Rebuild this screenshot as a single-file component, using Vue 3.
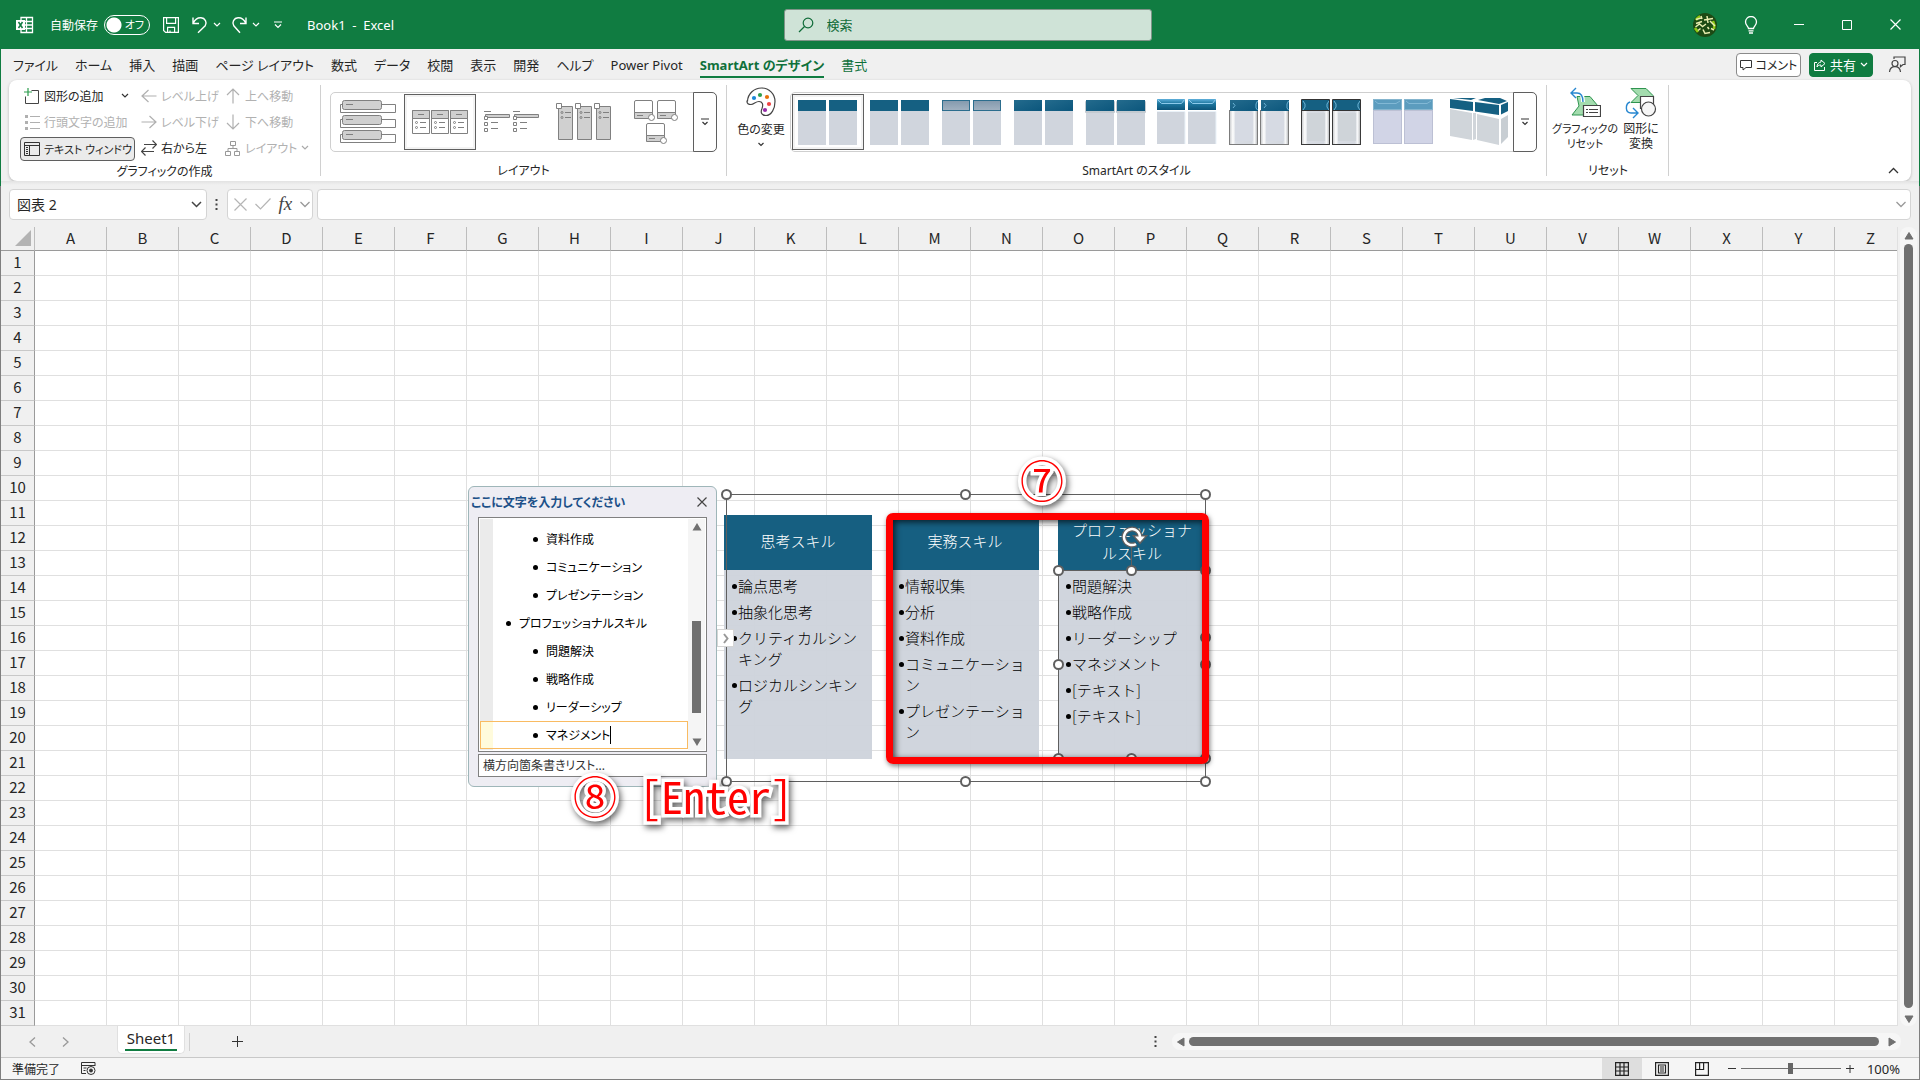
<template>
  <div class="window">
    <!-- タイトルバー -->
    <header class="titlebar">
      <div class="title-left">
        <svg class="app-icon" width="18" height="18" viewBox="0 0 18 18">
          <path d="M5 1.500h11.500v15H5zM5 5.500h11.500M5 9h11.500M5 12.500h11.500M10.500 1.500v15" fill="none" stroke="#fff" stroke-width="1.300" />
          <rect x="0" y="4" width="9" height="10" fill="#fff" />
          <path d="M2.500 6l4 6M6.500 6l-4 6" stroke="#107c41" stroke-width="1.500" />
        </svg>
        <label class="autosave">
          <span>自動保存</span>
          <span class="switch">
            <input v-model="autoSave" type="checkbox" role="switch" />
            <span class="switch-text">オフ</span>
          </span>
        </label>
        <button class="plain save" aria-label="上書き保存">
          <svg width="16" height="16" viewBox="0 0 16 16" fill="none" stroke="#fff" stroke-width="1.200">
            <path d="M.6.600h14.800v14.800H2.600L.6 13.400zM3.600.6v5.800h9V.6M4.600 15.400v-5h7v5M7 15.400v-2" />
          </svg>
        </button>
        <button class="plain undo" aria-label="元に戻す">
          <svg width="16" height="18" viewBox="0 0 16 18" fill="none" stroke="#fff" stroke-width="1.400">
            <path d="M1 1.500v6h6M1.200 7.200C3 3.500 6 1.600 9 1.800c4 .2 6.500 4.500 4.200 8L6 16.800" />
          </svg>
          <svg width="8" height="6" viewBox="0 0 8 6" fill="none" stroke="#fff" stroke-width="1.200"><path d="M1 1l3 3 3-3" /></svg>
        </button>
        <button class="plain undo" aria-label="やり直し">
          <svg width="16" height="18" viewBox="0 0 16 18" fill="none" stroke="#fff" stroke-width="1.400">
            <path d="M15 1.500v6H9M14.800 7.200C13 3.500 10 1.600 7 1.800c-4 .2-6.500 4.500-4.200 8L9 16.800" />
          </svg>
          <svg width="8" height="6" viewBox="0 0 8 6" fill="none" stroke="#fff" stroke-width="1.200"><path d="M1 1l3 3 3-3" /></svg>
        </button>
        <button class="plain qat" aria-label="クイック アクセス ツール バーのユーザー設定">
          <svg width="8" height="8" viewBox="0 0 8 8" fill="none" stroke="#fff" stroke-width="1.200"><path d="M0 1h8M1 3.500l3 3 3-3" /></svg>
        </button>
        <span class="doc-name">Book1&nbsp; -&nbsp; Excel</span>
      </div>
      <label class="search">
        <svg width="16" height="16" viewBox="0 0 16 16" fill="none" stroke="#0f6b38" stroke-width="1.200">
          <circle cx="10" cy="6" r="4.800" /><path d="M6.500 9.500L1 15" />
        </svg>
        <input type="text" placeholder="検索" aria-label="検索" />
      </label>
      <div class="title-right">
        <svg class="avatar" width="24" height="24" viewBox="0 0 24 24">
          <circle cx="12" cy="12" r="12" fill="#1d4a14" />
          <path d="M20 8a11 11 0 0 1 1 8M3 7a11 11 0 0 1 4-4M2 15l3 4" stroke="#8bc814" stroke-width="2.600" fill="none" />
          <path d="M3 6.500l5-1.500M8 3l1 3M3 10.500l6-2M2.500 14l4-3 3 2.500M14 3l1 7M11 7l9-1.500M17 8l5 5M13 11l-4 3M5 17.500l2.500-2M10 16.500l2 4 5-1M14.500 14l1.500 2M18 15.500l3 1.500" stroke="#e8eeb0" stroke-width="1.500" fill="none" />
        </svg>
        <button class="plain win" aria-label="ヒント">
          <svg width="14" height="18" viewBox="0 0 14 18" fill="none" stroke="#fff" stroke-width="1.300">
            <path d="M4.500 12.500c0-2-3-3.200-3-6.500a5.500 5.500 0 0 1 11 0c0 3.300-3 4.500-3 6.500zM4.500 14.800h5M5 17h4" />
          </svg>
        </button>
        <button class="plain win" aria-label="最小化">
          <svg width="10" height="10" viewBox="0 0 10 10"><path d="M0 4.500h10" stroke="#fff" /></svg>
        </button>
        <button class="plain win" aria-label="元に戻す (縮小)">
          <svg width="10" height="10" viewBox="0 0 10 10"><path d="M.5.500h9v9h-9z" stroke="#fff" fill="none" /></svg>
        </button>
        <button class="plain win" aria-label="閉じる">
          <svg width="11" height="11" viewBox="0 0 11 11"><path d="M.5.500l10 10M10.500.500l-10 10" stroke="#fff" stroke-width="1.200" /></svg>
        </button>
      </div>
    </header>

    <!-- タブ -->
    <nav class="tabs">
      <button
        v-for="tab in tabs"
        :key="tab"
        class="tab"
        :class="{ active: tab === activeTab, context: tab === '書式' }"
        @click="activeTab = tab"
      >
        {{ tab }}
      </button>
      <div class="tabs-right">
        <button class="comment-btn">
          <svg width="12" height="12" viewBox="0 0 12 12" fill="none" stroke="#333"><path d="M.5 1.500h11v7H6l-3 2.500V8.500H.5z" /></svg>
          コメント
        </button>
        <button class="share-btn">
          <svg width="12" height="12" viewBox="0 0 12 12" fill="none" stroke="#fff"><path d="M3 3.500H.5v8h10V8M7 1l4 3.500L7 8V6C5 6 4 6.500 3 8c.2-3 1.500-4.500 4-5z" /></svg>
          共有
          <svg width="8" height="6" viewBox="0 0 8 6" fill="none" stroke="#fff" stroke-width="1.200"><path d="M1 1l3 3 3-3" /></svg>
        </button>
        <button class="plain presence" aria-label="プレゼンス">
          <svg width="18" height="17" viewBox="0 0 18 17" fill="none" stroke="#444" stroke-width="1.200">
            <path d="M6 3V1h11v7.500h-2l-2.500 2.200V8.500" /><circle cx="7" cy="7.500" r="3" /><path d="M1.500 16c.3-3.500 2.500-5.300 5.500-5.300s5.200 1.800 5.500 5.300" />
          </svg>
        </button>
      </div>
    </nav>

    <!-- リボン -->
    <div class="ribbon-area">
      <section class="ribbon">
        <div class="group">
          <div class="cmd-grid">
            <button class="cmd">
              <svg width="16" height="16" viewBox="0 0 16 16" fill="none"><path d="M7.500 2.500h7v13h-13v-7" stroke="#444" /><path d="M4 0v8M0 4h8" stroke="#2e9e4f" stroke-width="1.200" /></svg>
              図形の追加
              <svg class="split" width="8" height="6" viewBox="0 0 8 6" fill="none" stroke="#333" stroke-width="1.200"><path d="M1 1l3 3 3-3" /></svg>
            </button>
            <button class="cmd" disabled>
              <svg width="16" height="16" viewBox="0 0 16 16" fill="none" stroke="#b0b0b0" stroke-width="1.200"><path d="M15.500 8H1M7.500 2L1 8l6.500 6" /></svg>
              レベル上げ
            </button>
            <button class="cmd" disabled>
              <svg width="16" height="16" viewBox="0 0 16 16" fill="none" stroke="#b0b0b0" stroke-width="1.200"><path d="M8 15.500V1M2 7l6-6 6 6" /></svg>
              上へ移動
            </button>
            <button class="cmd" disabled>
              <svg width="16" height="16" viewBox="0 0 16 16" fill="none" stroke="#b0b0b0"><path d="M6 2.500h10M6 8.500h10M6 14.500h10" /><path d="M1 2.500h3M1 8.500h3M1 14.500h3" stroke-width="3" /></svg>
              行頭文字の追加
            </button>
            <button class="cmd" disabled>
              <svg width="16" height="16" viewBox="0 0 16 16" fill="none" stroke="#b0b0b0" stroke-width="1.200"><path d="M.5 8H15M8.500 2L15 8l-6.500 6" /></svg>
              レベル下げ
            </button>
            <button class="cmd" disabled>
              <svg width="16" height="16" viewBox="0 0 16 16" fill="none" stroke="#b0b0b0" stroke-width="1.200"><path d="M8 .5V15M2 9l6 6 6-6" /></svg>
              下へ移動
            </button>
            <button class="cmd pressed">
              <svg width="16" height="14" viewBox="0 0 16 14" fill="none" stroke="#333"><path d="M.5.500h15v13H.5zM.5 3.500h15M5.500 3.500v10M2 5.500h2M2 7.500h2M2 9.500h2M2 11.500h2" /></svg>
              テキスト ウィンドウ
            </button>
            <button class="cmd">
              <svg width="16" height="16" viewBox="0 0 16 16" fill="none" stroke="#444" stroke-width="1.200"><path d="M3 4.500h12.500M11.500.5l4 4-4 4M13 11.500H.5M4.500 7.500l-4 4 4 4" /></svg>
              右から左
            </button>
            <button class="cmd" disabled>
              <svg width="16" height="16" viewBox="0 0 16 16" fill="none" stroke="#999"><path d="M5.500 1.500h5v4h-5zM.5 11.500h5v4h-5zM9.500 11.500h5v4h-5zM3 11.500v-3h9v3M8 5.500v3" /></svg>
              レイアウト
              <svg width="8" height="6" viewBox="0 0 8 6" fill="none" stroke="#aaa" stroke-width="1.200"><path d="M1 1l3 3 3-3" /></svg>
            </button>
          </div>
          <div class="group-label">グラフィックの作成</div>
        </div>

        <div class="group">
          <div class="gallery">
            <button
              v-for="(layout, i) in layouts"
              :key="layout"
              class="thumb"
              :class="{ selected: i === 1 }"
              :aria-label="layout"
            >
              <svg width="70" height="54" viewBox="1 1 70 54" fill="none" stroke="#808080">
                <template v-if="i === 0">
                  <g v-for="n in 3" :key="n">
                    <path :d="`M8.500 ${n * 15 - 4.500}h55v8h-55z`" fill="#fff" />
                    <rect x="10.500" :y="n * 15 - 8.500" width="39" height="9" rx="2" fill="#d0d0d0" />
                    <path :d="`M14 ${n * 15 - 4.500}h7`" />
                  </g>
                </template>
                <template v-else-if="i === 1">
                  <g v-for="n in 3" :key="n">
                    <path :d="`M${n * 19 - 10.500} 16.500h17v23h-17z`" fill="#fff" />
                    <path :d="`M${n * 19 - 10.500} 16.500h17v8h-17z`" fill="#d0d0d0" />
                    <path :d="`M${n * 19 - 5} 20.500h6M${n * 19 - 3} 28.500h6M${n * 19 - 3} 33.500h6`" />
                    <circle :cx="n * 19 - 6.500" cy="28.500" r="1" /><circle :cx="n * 19 - 6.500" cy="33.500" r="1" />
                  </g>
                </template>
                <template v-else-if="i === 2">
                  <g v-for="n in 2" :key="n">
                    <path :d="`M${n * 29 - 19.500} 20.500h24v3h-24z`" fill="#d0d0d0" />
                    <path :d="`M${n * 29 - 21} 17.500h7M${n * 29 - 14} 28.500h7M${n * 29 - 14} 34.500h7`" />
                    <path :d="`M${n * 29 - 20.500} 22.500h3v3h-3zM${n * 29 - 20.500} 28.500h3v3h-3zM${n * 29 - 20.500} 34.500h3v3h-3z`" fill="#fff" />
                  </g>
                </template>
                <template v-else-if="i === 3">
                  <g v-for="n in 3" :key="n">
                    <path :d="`M${n * 19 - 8.500} 12.500h14v33h-14z`" fill="#d0d0d0" />
                    <path :d="`M${n * 19 - 10.500} 9.500h5v5h-5z`" fill="#fff" />
                    <path :d="`M${n * 19 - 2} 18.500h6M${n * 19 - 2} 23.500h6`" />
                    <circle :cx="n * 19 - 5" cy="18.500" r="1" /><circle :cx="n * 19 - 5" cy="23.500" r="1" />
                  </g>
                </template>
                <template v-else>
                  <g v-for="(p, n) in [[14, 6], [37, 6], [26, 29]]" :key="n" :transform="`translate(${p[0]} ${p[1]})`">
                    <rect x=".5" y=".5" width="18" height="18" rx="1.500" fill="#fff" />
                    <path d="M.5 12.500h18v6H.5z" fill="#d0d0d0" /><path d="M3 15.500h6" />
                    <circle cx="17.500" cy="17.500" r="3" fill="#fff" />
                  </g>
                </template>
              </svg>
            </button>
            <button class="more" aria-label="その他のレイアウト">
              <svg width="8" height="8" viewBox="0 0 8 8" fill="none" stroke="#333" stroke-width="1.200"><path d="M0 1h8M1.500 4L4 6.500 6.500 4" /></svg>
            </button>
          </div>
          <div class="group-label">レイアウト</div>
        </div>

        <div class="group">
          <div class="group-body">
            <button class="big color-btn">
              <svg width="30" height="30" viewBox="0 0 30 30">
                <path d="M1.500 14C2 6.500 8 1 15.500 1 23 1 29 7 29 14.500c0 7-3.500 14-9 14-5 0-5.500-3.500-4-7 1.500-3.800.5-7-3-7-3.500 0-5 3-8 3-2.500 0-4.200-1-4-3.500z" fill="#fff" stroke="#444" stroke-width="1.200" />
                <circle cx="8" cy="11" r="2.100" fill="#1b87d6" /><circle cx="14" cy="8" r="2.100" fill="#2e9e4f" />
                <circle cx="21" cy="10" r="2.100" fill="#e8710a" /><circle cx="23" cy="17" r="2.100" fill="#ef4444" />
                <circle cx="19" cy="23" r="2.100" fill="#952ba8" />
              </svg>
              <span>色の変更</span>
              <svg width="8" height="6" viewBox="0 0 8 6" fill="none" stroke="#333" stroke-width="1.200"><path d="M1.500 1L4 3.500 6.500 1" /></svg>
            </button>
            <div class="gallery">
              <button
                v-for="(style, i) in styles"
                :key="style"
                class="thumb"
                :class="{ selected: i === 0 }"
                :aria-label="style"
              >
                <svg width="70" height="54" viewBox="1 1 70 54">
                  <defs v-if="i === 0">
                    <linearGradient id="soft" x1="0" y1="0" x2="0" y2="1"><stop offset="0" stop-color="#8298ac" /><stop offset="1" stop-color="#a3b3c2" /></linearGradient>
                    <linearGradient id="deep" x1="0" y1="0" x2="1" y2="1"><stop offset="0" stop-color="#246b8d" /><stop offset="1" stop-color="#0b567c" /></linearGradient>
                    <linearGradient id="gloss" x1="0" y1="0" x2="0" y2="1"><stop offset="0" stop-color="#5fb0dc" /><stop offset=".4" stop-color="#1e779f" /><stop offset="1" stop-color="#0c5479" /></linearGradient>
                    <linearGradient id="metal" x1="0" y1="0" x2="1" y2="0"><stop offset="0" stop-color="#c4c6c9" /><stop offset=".12" stop-color="#fff" /><stop offset=".22" stop-color="#d8dce3" /><stop offset=".8" stop-color="#d4d8df" /><stop offset=".9" stop-color="#f8f9fa" /><stop offset="1" stop-color="#b0b2b5" /></linearGradient>
                  </defs>
                  <template v-if="i < 5">
                    <g v-for="x in [6, 37]" :key="x">
                      <rect :x="x" y="17" width="28" height="34" fill="#d0d5dd" />
                      <rect v-if="i === 4" :x="x - 1" y="7" width="30" height="12" rx="1" fill="#c3cad0" />
                      <rect :x="x" y="6" width="28" height="11" :fill="headFill[i]" />
                      <rect v-if="i === 2" :x="x + .5" y="6.500" width="27" height="10" fill="none" stroke="#2c6d8d" />
                    </g>
                  </template>
                  <template v-else-if="i === 5">
                    <g v-for="x in [5, 36]" :key="x">
                      <rect :x="x" y="17" width="28" height="33" fill="#d0d5dd" />
                      <path :d="`M${x} 17.500h28v32.500`" fill="none" stroke="#eaf2f9" />
                      <rect :x="x" y="5" width="28" height="11" fill="url(#gloss)" />
                      <path :d="`M${x + .5} 5.500l4 4h20l3-4`" fill="none" stroke="#8bc9ea" />
                    </g>
                  </template>
                  <template v-else-if="i === 6 || i === 7">
                    <g v-for="x in [6, 37]" :key="x">
                      <rect :x="x - .5" y="16.500" width="28" height="34" fill="url(#metal)" :stroke="i === 6 ? '#7c7c7c' : '#3a3a3a'" />
                      <rect :x="x + 5" y="19" width="18" height="28" :fill="i === 6 ? '#d6dae3' : '#cfd4d9'" />
                      <rect :x="x" y="6" width="28" height="11" :fill="i === 6 ? 'url(#deep)' : '#156082'" />
                      <path v-if="i === 6" :d="`M${x + 3} 9l2 2.500-2 2.500M${x + 27.500} 7l-1.500 3v4l1.500 2`" fill="none" stroke="#6db4d6" />
                      <path v-else :d="`M${x + 1} 7l2 3v3l-2 3M${x + 27} 7l-2 3v3l2 3`" fill="none" stroke="#6db4d6" />
                      <path v-if="i === 7" :d="`M${x - .5} 5.500h28v11h-28z`" fill="none" stroke="#333" />
                    </g>
                  </template>
                  <template v-else-if="i === 8">
                    <g v-for="x in [5, 36]" :key="x">
                      <rect :x="x + .5" y="16.500" width="28" height="33" fill="#d1d4e6" stroke="#bcc0d4" />
                      <rect :x="x + .5" y="5.500" width="28" height="10" fill="#5c9cbe" stroke="#85b5ce" />
                      <path :d="`M${x + 2} 7l3 2.500h18l4-2.500`" stroke="#82b8d5" fill="none" />
                    </g>
                  </template>
                  <template v-else>
                    <path d="M10 15l22 4v27l-22-4zM37 20l22 5v26l-22-5z" fill="#d0d5da" /><path d="M61 25l7-4v22l-7 7z" fill="#c8ced3" />
                    <path d="M33 19l3 0v26l-3 1z" fill="#d0d5da" />
                    <path d="M10 5l23 3v9l-23-3zM35 8l24 3v10l-24-3.500zM61 11l7-3v9l-7 3.500z" fill="#156082" />
                    <path d="M13 4h23l-5 2zM38 6l7-2h15l7 3-8 3z" fill="#156082" />
                  </template>
                </svg>
              </button>
              <button class="more" aria-label="その他のスタイル">
                <svg width="8" height="8" viewBox="0 0 8 8" fill="none" stroke="#333" stroke-width="1.200"><path d="M0 1h8M1.500 4L4 6.500 6.500 4" /></svg>
              </button>
            </div>
          </div>
          <div class="group-label">SmartArt のスタイル</div>
        </div>

        <div class="group reset-group">
          <div class="group-body">
            <button class="big reset-btn">
              <svg width="32" height="32" viewBox="0 0 32 32" fill="none">
                <path d="M8 9.500h13l8 9.500-3 9H3l7-9z" fill="#a3dcae" stroke="#2f9450" />
                <path d="M3 6h6c4 0 5 3 5 9" stroke="#fff" stroke-width="4" /><path d="M7 1L2 6l5 5M2 6h6c4 0 6 3 6 9" stroke="#2787d0" stroke-width="1.400" />
                <path d="M14.500 18.500h17v11h-17z" fill="#fff" stroke="#444" stroke-width="1.200" /><path d="M17 22.500h2M20 22.500h9M17 25.500h2M20 25.500h9" stroke="#444" />
              </svg>
              <span>グラフィックの<br />リセット</span>
            </button>
            <button class="big convert-btn">
              <svg width="32" height="32" viewBox="0 0 32 32" fill="none">
                <path d="M6 1.500h15l7 7-6 7H6l7-7z" fill="#a3dcae" stroke="#2f9450" />
                <path d="M15.500 9.500h13v12h-13z" fill="#fff" stroke="#444" stroke-width="1.200" /><circle cx="23.500" cy="22" r="7" fill="#f6f6f6" stroke="#444" stroke-width="1.200" />
                <path d="M5 15c-5 2-5 11 1 11h7M8 21l5 5-5 5" stroke="#2787d0" stroke-width="1.400" />
              </svg>
              <span>図形に<br />変換</span>
            </button>
          </div>
          <div class="group-label">リセット</div>
        </div>
        <button class="plain collapse" aria-label="リボンを折りたたむ">
          <svg width="11" height="7" viewBox="0 0 11 7" fill="none" stroke="#333" stroke-width="1.300"><path d="M1 6l4.500-4.500L10 6" /></svg>
        </button>
      </section>
    </div>

    <!-- 数式バー -->
    <div class="formula-bar">
      <div class="name-box">
        <input v-model="nameBox" type="text" aria-label="名前ボックス" />
        <svg width="11" height="7" viewBox="0 0 11 7" fill="none" stroke="#444" stroke-width="1.500"><path d="M1 1l4.500 4.500L10 1" /></svg>
      </div>
      <svg class="dots" width="3" height="11" viewBox="0 0 3 11"><path d="M.5 0h2v2h-2zM.5 4.500h2v2h-2zM.5 9h2v2h-2z" fill="#444" /></svg>
      <div class="fx-box">
        <button class="plain" aria-label="キャンセル"><svg width="13" height="13" viewBox="0 0 13 13"><path d="M.5.500l12 12M12.500.500l-12 12" stroke="#b5b5b5" stroke-width="1.200" /></svg></button>
        <button class="plain" aria-label="入力"><svg width="16" height="12" viewBox="0 0 16 12" fill="none"><path d="M.5 6l5 5L15.500.500" stroke="#b5b5b5" stroke-width="1.200" /></svg></button>
        <button class="plain fx" aria-label="関数の挿入">fx</button>
        <svg width="10" height="7" viewBox="0 0 10 7" fill="none" stroke="#999" stroke-width="1.300"><path d="M.5 1L5 5.500 9.500 1" /></svg>
      </div>
      <div class="formula">
        <input v-model="formula" type="text" aria-label="数式バー" />
        <svg width="10" height="7" viewBox="0 0 10 7" fill="none" stroke="#999" stroke-width="1.300"><path d="M.5 1L5 5.500 9.500 1" /></svg>
      </div>
    </div>

    <!-- シート -->
    <main class="sheet-row">
      <div class="sheet">
        <table class="cells">
          <thead>
            <tr>
              <th class="corner"><svg width="16" height="16" viewBox="0 0 16 16"><path d="M16 0v16H0z" fill="#b3b3b3" /></svg></th>
              <th v-for="col in columns" :key="col">{{ col }}</th>
            </tr>
          </thead>
          <tbody>
            <tr v-for="row in 31" :key="row">
              <th>{{ row }}</th>
              <td v-for="col in columns" :key="col"></td>
            </tr>
          </tbody>
        </table>

        <!-- SmartArt 本体 -->
        <div class="smartart">
          <div v-for="item in skills" :key="item.title" class="skill">
            <div class="skill-head">{{ item.title }}</div>
            <ul class="skill-body">
              <li v-for="(text, i) in item.children" :key="i">{{ text }}</li>
            </ul>
          </div>
        </div>
        <svg class="handles" width="500" height="310" viewBox="715 484 500 310" fill="none" stroke="#5f5f5f">
          <path d="M726.500 494.500h479v287h-479z" />
          <path d="M1058.500 570.500h147v188h-147zM1131.500 545v25" />
          <g fill="#fff" stroke-width="2">
            <circle v-for="(p, i) in handlePoints" :key="i" :cx="p[0]" :cy="p[1]" r="4.500" />
          </g>
          <path d="M1136 544a8 8 0 1 1 4-7" stroke-width="5" />
          <path d="M1134 536h12l-6 7z" fill="#5f5f5f" stroke-width="2" />
          <path d="M1136 544a8 8 0 1 1 4-7" stroke="#fff" stroke-width="2.500" />
          <path d="M1135 536.500h10l-5 5.500z" fill="#fff" stroke="none" />
        </svg>

        <!-- テキスト ウィンドウ -->
        <section class="text-pane">
          <div class="pane-head">
            <h2>ここに文字を入力してください</h2>
            <button class="plain" aria-label="閉じる"><svg width="10" height="10" viewBox="0 0 10 10"><path d="M.5.500l9 9M9.500.500l-9 9" stroke="#444" stroke-width="1.200" /></svg></button>
          </div>
          <div class="pane-list">
            <ul>
              <li
                v-for="line in outline"
                :key="line.text"
                :class="{ top: line.level === 1, editing: line.text === 'マネジメント' }"
              >
                <span>{{ line.text }}</span>
              </li>
            </ul>
            <div class="pane-scroll">
              <svg width="10" height="8" viewBox="0 0 10 8"><path d="M5 0l4.500 7.500H.5z" fill="#707070" /></svg>
              <div class="pane-track"><div class="pane-thumb"></div></div>
              <svg width="10" height="8" viewBox="0 0 10 8"><path d="M5 8L.5.500h9z" fill="#707070" /></svg>
            </div>
          </div>
          <div class="pane-foot">横方向箇条書きリスト...</div>
        </section>
        <button class="pane-toggle" aria-label="テキスト ウィンドウの表示">
          <svg width="6" height="11" viewBox="0 0 6 11" fill="none" stroke="#999" stroke-width="2"><path d="M1 1l3.500 4.500L1 10" /></svg>
        </button>

        <!-- 手順の注釈 -->
        <div class="callout-box"></div>
        <span class="callout step7">⑦</span>
        <span class="callout step8">⑧</span>
        <span class="callout key">[Enter]</span>
      </div>
      <div class="vscroll">
        <svg width="10" height="8" viewBox="0 0 10 8"><path d="M5 .5l4 6.500H1z" fill="#707070" stroke="#707070" stroke-linejoin="round" /></svg>
        <div class="vthumb"></div>
        <svg width="10" height="8" viewBox="0 0 10 8"><path d="M5 7.500L1 1h8z" fill="#707070" stroke="#707070" stroke-linejoin="round" /></svg>
      </div>
    </main>

    <!-- シート見出し -->
    <div class="sheet-tabs">
      <button class="plain nav" aria-label="前のシート"><svg width="7" height="10" viewBox="0 0 7 10" fill="none" stroke="#999" stroke-width="1.300"><path d="M6 .5L1 5l5 4.500" /></svg></button>
      <button class="plain nav" aria-label="次のシート"><svg width="7" height="10" viewBox="0 0 7 10" fill="none" stroke="#999" stroke-width="1.300"><path d="M1 .5L6 5 1 9.500" /></svg></button>
      <button class="sheet-tab"><span>Sheet1</span></button>
      <span class="tab-line"></span>
      <button class="plain add" aria-label="新しいシート"><svg width="11" height="11" viewBox="0 0 11 11"><path d="M5.500 0v11M0 5.500h11" stroke="#333" /></svg></button>
      <svg class="grip" width="3" height="11" viewBox="0 0 3 11"><path d="M.5 0h2v2h-2zM.5 4.500h2v2h-2zM.5 9h2v2h-2z" fill="#444" /></svg>
      <div class="hscroll">
        <svg width="8" height="10" viewBox="0 0 8 10"><path d="M.5 5L7 1v8z" fill="#707070" stroke="#707070" stroke-linejoin="round" /></svg>
        <div class="hthumb"></div>
        <svg width="8" height="10" viewBox="0 0 8 10"><path d="M7.500 5L1 1v8z" fill="#707070" stroke="#707070" stroke-linejoin="round" /></svg>
      </div>
    </div>

    <!-- ステータスバー -->
    <footer class="status">
      <span>準備完了</span>
      <svg class="macro" width="15" height="13" viewBox="0 0 15 13" fill="none" stroke="#333"><path d="M14 4V.5H.5v11H5M.5 3.500H14M2.500 6h3M2.500 8.500h2" /><circle cx="10" cy="8.500" r="4" /><circle cx="10" cy="8.500" r="1.500" fill="#333" /></svg>
      <div class="views">
        <button class="view on" aria-label="標準"><svg width="14" height="14" viewBox="0 0 14 14" fill="none" stroke="#222" stroke-width="1.200"><path d="M.6.600h12.800v12.800H.6zM5 .6v12.800M9 .6v12.800M.6 5h12.800M.6 9h12.800" /></svg></button>
        <button class="view" aria-label="ページ レイアウト"><svg width="14" height="14" viewBox="0 0 14 14" fill="none" stroke="#222" stroke-width="1.200"><path d="M.6.600h12.800v12.800H.6zM3.500 3h7v8h-7zM5 5h4M5 7h4M5 9h4" /></svg></button>
        <button class="view" aria-label="改ページ プレビュー"><svg width="14" height="14" viewBox="0 0 14 14" fill="none" stroke="#222" stroke-width="1.200"><path d="M.6.600h12.800v12.800H.6zM.6 7.500h8V.6M4.600.6v6.900" /></svg></button>
      </div>
      <div class="zoom">
        <button class="plain" aria-label="縮小"><svg width="8" height="8" viewBox="0 0 8 8"><path d="M0 3.500h8" stroke="#333" /></svg></button>
        <input v-model="zoom" type="range" min="10" max="190" aria-label="ズーム" />
        <button class="plain" aria-label="拡大"><svg width="8" height="8" viewBox="0 0 8 8"><path d="M0 3.500h8M4 0v8" stroke="#333" /></svg></button>
        <span class="percent">{{ zoom }}%</span>
      </div>
    </footer>
  </div>
</template>

<script setup>
import { ref } from 'vue';

const autoSave = ref(false);
const nameBox = ref('図表 2');
const formula = ref('');
const zoom = ref(100);

const tabs = [
  'ファイル', 'ホーム', '挿入', '描画', 'ページ レイアウト', '数式', 'データ', '校閲',
  '表示', '開発', 'ヘルプ', 'Power Pivot', 'SmartArt のデザイン', '書式'
];
const activeTab = ref('SmartArt のデザイン');

const layouts = ['縦方向ボックス リスト', '横方向箇条書きリスト', '線区切りリスト', '縦棒リスト', '図付きリスト'];
const styles = [
  'シンプル', '白枠', 'パステル', 'グラデーション', '光沢',
  '立体グラデーション', '凹凸', 'メタリック', 'フラット', 'ブロック'
];
const headFill = ['#156082', '#156082', 'url(#soft)', 'url(#deep)', 'url(#deep)'];

// A から Z までの列見出し
const columns = Array.from({ length: 26 }, (_, i) => String.fromCharCode(65 + i));

const skills = [
  { title: '思考スキル', children: ['論点思考', '抽象化思考', 'クリティカルシンキング', 'ロジカルシンキング'] },
  { title: '実務スキル', children: ['情報収集', '分析', '資料作成', 'コミュニケーション', 'プレゼンテーション'] },
  {
    title: 'プロフェッショナルスキル',
    children: ['問題解決', '戦略作成', 'リーダーシップ', 'マネジメント', '[テキスト]', '[テキスト]']
  }
];

const outline = [
  { level: 2, text: '資料作成' },
  { level: 2, text: 'コミュニケーション' },
  { level: 2, text: 'プレゼンテーション' },
  { level: 1, text: 'プロフェッショナルスキル' },
  { level: 2, text: '問題解決' },
  { level: 2, text: '戦略作成' },
  { level: 2, text: 'リーダーシップ' },
  { level: 2, text: 'マネジメント' }
];

// 選択ハンドルの位置
const handlePoints = [
  [726.5, 494.5], [965.5, 494.5], [1205.5, 494.5], [1205.5, 637.5],
  [726.5, 781.5], [965.5, 781.5], [1205.5, 781.5],
  [1058.5, 570.5], [1131.5, 570.5], [1205.5, 570.5],
  [1058.5, 664.5], [1205.5, 664.5],
  [1058.5, 758.5], [1131.5, 758.5], [1205.5, 758.5]
];
</script>

<style>
body {
  margin: 0;
  background: #f0f0f0;
}
</style>

<style scoped>
.window {
  height: 100vh;
  display: flex;
  flex-direction: column;
  box-sizing: border-box;
  padding: 0 1px 1px;
  overflow: hidden;
  background: linear-gradient(#107c41 0 186px, #7f7f7f 186px);
  font-family: "Noto Sans", "Noto Sans CJK JP", sans-serif;
  font-feature-settings: "palt";
  font-size: 12px;
  color: #262626;
}

button,
input {
  font: inherit;
  font-feature-settings: inherit;
  color: inherit;
}

button {
  cursor: pointer;
  white-space: nowrap;
}

svg {
  flex: none;
}

.plain {
  display: flex;
  align-items: center;
  justify-content: center;
  background: none;
  border: 0;
  padding: 0;
}

/* タイトルバー */
.titlebar {
  display: grid;
  grid-template-columns: 1fr 368px 1fr;
  align-items: center;
  height: 49px;
  padding: 0 1px 0 16px;
  margin: 0 -1px;
  background: #107c41;
  color: #fff;
  flex: none;
}

.title-left,
.title-right {
  display: flex;
  align-items: center;
}

.autosave {
  display: flex;
  align-items: center;
  gap: 6px;
  margin-left: 16px;
  font-size: 12px;
}

.switch {
  position: relative;
  display: flex;
}

.switch input {
  appearance: none;
  width: 46px;
  height: 20px;
  margin: 0;
  border: 1px solid #fff;
  border-radius: 10px;
  background: radial-gradient(circle at 9px 9px, #fff 7px, transparent 8px);
}

.switch-text {
  position: absolute;
  right: 6px;
  top: 2px;
  font-size: 11px;
  line-height: 16px;
}

.save {
  margin-left: 13px;
}

.undo {
  gap: 5px;
  margin-left: 13px;
}

.undo + .undo {
  margin-left: 10px;
}

.qat {
  margin-left: 14px;
}

.doc-name {
  margin-left: 25px;
  font-size: 13px;
}

.search {
  display: flex;
  align-items: center;
  gap: 11px;
  box-sizing: border-box;
  height: 32px;
  padding: 0 13px;
  border: 1px solid #7f9488;
  border-radius: 3px;
  background: #cfe3d7;
  color: #0f6b38;
}

.search input {
  flex: 1;
  border: 0;
  outline: 0;
  background: none;
  font-size: 13px;
}

.search input::placeholder {
  color: #0f6b38;
}

.title-right {
  justify-content: flex-end;
}

.avatar {
  margin-right: 10px;
}

.win {
  width: 48px;
  height: 48px;
}

/* タブ */
.tabs {
  display: flex;
  align-items: center;
  gap: 17px;
  height: 31px;
  padding: 0 10px 0 12px;
  background: #f0f0f0;
  flex: none;
}

.tab {
  height: 31px;
  padding: 0;
  border: 0;
  background: none;
  font-size: 13px;
}

.tab.active {
  height: 27px;
  padding-top: 2px;
  font-weight: 700;
  border-bottom: 2px solid #107c41;
  color: #0f703b;
}

.tab.context {
  color: #0f703b;
}

.tabs-right {
  display: flex;
  align-items: center;
  gap: 8px;
  margin-left: auto;
}

.presence {
  width: 24px;
  margin-left: 4px;
}

.comment-btn,
.share-btn {
  display: flex;
  align-items: center;
  justify-content: center;
  gap: 4px;
  width: 65px;
  height: 24px;
  padding: 0;
  border: 1px solid #8a8a8a;
  border-radius: 4px;
  background: #fff;
}

.share-btn {
  width: 64px;
  border-color: #107c41;
  background: #107c41;
  color: #fff;
  font-size: 13px;
}

/* リボン */
.ribbon-area {
  padding: 0 8px;
  background: #f0f0f0;
  flex: none;
}

.ribbon {
  display: flex;
  height: 101px;
  border-radius: 8px;
  background: #fff;
  box-shadow: 0 1px 3px rgba(0, 0, 0, 0.25);
}

.group {
  position: relative;
  display: flex;
  flex-direction: column;
  justify-content: space-between;
  padding: 3px 10px 0 9px;
}

.group::after {
  content: "";
  position: absolute;
  right: 0;
  top: 5px;
  bottom: 5px;
  width: 1px;
  background: #d0d0d0;
}

.group-label {
  height: 21px;
  line-height: 21px;
  text-align: center;
}

.group-body {
  display: flex;
}

.cmd-grid {
  display: grid;
  grid-template-columns: 117px 84px 90px;
  grid-auto-rows: 26px;
  padding-left: 2px;
}

.cmd {
  display: flex;
  align-items: center;
  gap: 4px;
  padding: 0 4px;
  border: 0;
  background: none;
}

.cmd:disabled {
  color: #b1b1b1;
}

.cmd .split {
  margin-left: auto;
  margin-right: 4px;
}

.cmd.pressed {
  align-self: end;
  width: 115px;
  height: 24px;
  padding: 0 3px;
  border: 1px solid #5f5f5f;
  border-radius: 4px;
  background: #ebebeb;
  font-size: 11px;
}

.gallery {
  display: flex;
  box-sizing: border-box;
  height: 60px;
  margin-top: 9px;
  padding: 1px 0 1px 1px;
  border: 1px solid #cfcfcf;
  border-radius: 5px;
}

.thumb {
  display: flex;
  padding: 0;
  border: 1px solid transparent;
  background: none;
}

.thumb.selected {
  border-color: #5f5f5f;
  box-shadow: inset 0 0 0 2px #f3f3f3;
}

.more {
  display: flex;
  align-items: center;
  justify-content: center;
  width: 24px;
  margin: -2px -1px -2px 1px;
  padding: 0;
  border: 1px solid #5f5f5f;
  border-radius: 0 5px 5px 0;
  background: #fff;
}

.big {
  display: flex;
  flex-direction: column;
  align-items: center;
  gap: 2px;
  width: 56px;
  padding: 4px 0 0;
  border: 0;
  background: none;
  line-height: 15px;
}

.color-btn {
  gap: 5px;
  margin: 0 1px 0 -3px;
}

.reset-group {
  padding: 3px 5px 0;
}

.reset-btn {
  width: 66px;
  font-size: 11px;
}

.convert-btn {
  width: 46px;
}

.collapse {
  align-self: flex-end;
  margin: 0 12px 7px auto;
}

/* 数式バー */
.formula-bar {
  display: flex;
  align-items: center;
  height: 46px;
  padding: 0 8px;
  flex: none;
  background: linear-gradient(#e2e2e2, #f0f0f0 4px);
}

.name-box,
.fx-box,
.formula {
  display: flex;
  align-items: center;
  box-sizing: border-box;
  height: 31px;
  border: 1px solid #d4d4d4;
  border-radius: 4px;
  background: #fff;
}

.name-box {
  width: 198px;
  padding: 0 4px 0 7px;
}

.name-box input,
.formula input {
  flex: 1;
  min-width: 0;
  padding: 0;
  border: 0;
  outline: 0;
  background: none;
  font-size: 14px;
}

.dots {
  margin: 0 9px 0 8px;
}

.fx-box {
  justify-content: space-between;
  width: 86px;
  padding: 0 2px 0 6px;
}

.fx {
  font-family: "Liberation Serif", serif;
  font-size: 19px;
  font-style: italic;
  color: #444;
}

.formula {
  flex: 1;
  margin-left: 4px;
  padding: 0 4px;
}

/* シート */
.sheet-row {
  display: flex;
  flex: 1;
  min-height: 0;
  background: #f0f0f0;
}

.sheet {
  position: relative;
  flex: 1;
  min-width: 0;
  overflow: hidden;
  border-right: 1px solid #e0e0e0;
}

.cells {
  width: 1906px;
  table-layout: fixed;
  border-collapse: separate;
  border-spacing: 0;
  background: #fff;
}

.cells th,
.cells td {
  box-sizing: border-box;
  width: 72px;
  height: 25px;
  padding: 0;
  border-right: 1px solid #e0e0e0;
  border-bottom: 1px solid #e0e0e0;
}

.cells th {
  padding-bottom: 2px;
  font-family: "Noto Sans CJK JP", sans-serif;
  font-size: 15px;
  font-weight: 400;
  line-height: 20px;
  background: #f0f0f0;
}

.cells thead th {
  height: 24px;
  border-right-color: #bdbdbd;
  border-bottom-color: #9a9a9a;
}

.cells tbody th {
  border-right-color: #9a9a9a;
  border-bottom-color: #c8c8c8;
}

.cells .corner {
  width: 34px;
  text-align: right;
  padding-right: 3px;
}

.corner svg {
  display: block;
  margin-left: auto;
}

.smartart {
  position: absolute;
  left: 723px;
  top: 288px;
  display: flex;
  gap: 19px;
}

.skill {
  display: flex;
  flex-direction: column;
  width: 148px;
  font-family: "Noto Sans CJK JP", sans-serif;
  font-feature-settings: normal;
  font-size: 15px;
  font-weight: 300;
}

.skill-head {
  display: flex;
  align-items: center;
  justify-content: center;
  box-sizing: border-box;
  height: 55px;
  padding: 0 12px 4px;
  background: #165f81;
  color: #fff;
  line-height: 23px;
  text-align: center;
}

.skill-body {
  flex: 1;
  box-sizing: border-box;
  min-height: 189px;
  margin: 0;
  padding: 5px 2px 0 14px;
  background: rgba(206, 211, 219, 0.95);
  list-style: none;
}

.skill-body li {
  position: relative;
  margin-bottom: 5px;
  line-height: 21px;
  color: #000;
}

.skill-body li::before {
  content: "";
  position: absolute;
  left: -6px;
  top: 9px;
  width: 5px;
  height: 5px;
  border-radius: 50%;
  background: #000;
}

.handles {
  position: absolute;
  left: 714px;
  top: 257px;
}

/* テキスト ウィンドウ */
.text-pane {
  position: absolute;
  left: 467px;
  top: 259px;
  box-sizing: border-box;
  width: 249px;
  padding: 0 9px 9px;
  border: 1px solid #9fb6b9;
  border-radius: 6px;
  background: #eeedf3;
}

.pane-head {
  display: flex;
  align-items: center;
  justify-content: space-between;
  height: 30px;
  margin-left: -7px;
}

.pane-head h2 {
  margin: 0;
  font-size: 12px;
  font-weight: 700;
  color: #1c5088;
}

.pane-list {
  display: flex;
  box-sizing: border-box;
  height: 235px;
  padding: 1px;
  border: 1px solid #808080;
  background: #fff;
}

.pane-list ul {
  flex: 1;
  margin: 0;
  padding: 6px 0 0;
  list-style: none;
  background: linear-gradient(90deg, #ebebeb 13px, #fff 13px);
}

.pane-list li {
  display: flex;
  align-items: center;
  gap: 8px;
  box-sizing: border-box;
  height: 28px;
  padding-left: 53px;
  color: #000;
}

.pane-list li::before {
  content: "";
  width: 5px;
  height: 5px;
  border-radius: 50%;
  background: #000;
}

.pane-list li.top {
  padding-left: 26px;
}

.pane-list li.editing {
  padding-left: 52px;
  border: 1px solid #f9bb62;
  background: linear-gradient(90deg, #fffbdc 12px, #fff 12px);
}

.pane-list li.editing span {
  border-right: 1px solid #000;
}

.pane-scroll {
  display: flex;
  flex-direction: column;
  align-items: center;
  gap: 4px;
  width: 17px;
  padding: 4px 0;
  background: #f5f5f5;
}

.pane-track {
  display: flex;
  flex-direction: column;
  justify-content: flex-end;
  flex: 1;
  padding-bottom: 21px;
}

.pane-thumb {
  width: 9px;
  height: 92px;
  background: #707070;
}

.pane-foot {
  box-sizing: border-box;
  height: 23px;
  margin-top: 2px;
  padding-left: 4px;
  border: 1px solid #808080;
  background: #fff;
  line-height: 21px;
  color: #333;
}

.pane-toggle {
  position: absolute;
  left: 716px;
  top: 402px;
  display: flex;
  align-items: center;
  justify-content: center;
  width: 17px;
  height: 18px;
  padding: 0;
  border: 1px solid #d5d5d5;
  background: #fff;
}

/* 注釈 */
.callout-box {
  position: absolute;
  left: 885px;
  top: 286px;
  box-sizing: border-box;
  width: 323px;
  height: 251px;
  border: 7px solid #f00;
  border-radius: 7px;
  box-shadow: 1px 2px 5px rgba(0, 0, 0, 0.5), inset 2px 2px 6px rgba(0, 0, 0, 0.7);
}

.callout {
  position: absolute;
  font-family: "Noto Sans Mono CJK JP", "Noto Sans CJK JP", sans-serif;
  font-feature-settings: normal;
  font-size: 44px;
  line-height: 50px;
  color: #f00;
  -webkit-text-stroke: 7px #fff;
  paint-order: stroke fill;
  filter: drop-shadow(2px 3px 3px rgba(0, 0, 0, 0.6));
}

.step7 {
  left: 1019px;
  top: 227px;
}

.step8 {
  left: 572px;
  top: 543px;
}

.key {
  left: 638px;
  top: 543px;
}

/* スクロールバー */
.vscroll {
  display: flex;
  flex-direction: column;
  align-items: center;
  justify-content: space-between;
  width: 17px;
  margin: 0 2px 0 2px;
  padding: 5px 0 3px;
  box-sizing: border-box;
  border-radius: 8px;
  background: #f6f6f6;
}

.vthumb {
  width: 9px;
  flex: 1;
  margin: 4px 0 7px;
  border-radius: 5px;
  background: #707070;
}

/* シート見出し */
.sheet-tabs {
  display: flex;
  align-items: center;
  height: 31px;
  border-bottom: 1px solid #c8c8c8;
  background: #f0f0f0;
  flex: none;
}

.nav {
  width: 33px;
}

.nav:first-child {
  margin-left: 15px;
}

.sheet-tab {
  align-self: flex-start;
  width: 68px;
  height: 28px;
  margin-left: 35px;
  padding: 0;
  border: 1px solid #e0e0e0;
  border-top: 0;
  border-radius: 0 0 5px 5px;
  background: #fff;
  font-size: 15px;
}

.sheet-tab span {
  display: inline-block;
  width: 52px;
  border-bottom: 2px solid #107c41;
  line-height: 21px;
}

.tab-line {
  width: 1px;
  height: 18px;
  margin-left: 4px;
  background: #d0d0d0;
}

.add {
  width: 22px;
  margin-left: 36px;
}

.grip {
  margin-left: auto;
}

.hscroll {
  display: flex;
  align-items: center;
  box-sizing: border-box;
  width: 38%;
  height: 17px;
  margin: 0 18px 0 15px;
  padding: 0 5px;
  border-radius: 8px;
  background: #f6f6f6;
}

.hthumb {
  flex: 1;
  height: 9px;
  margin: 0 9px 0 4px;
  border-radius: 5px;
  background: #707070;
}

/* ステータスバー */
.status {
  display: flex;
  align-items: center;
  height: 21px;
  padding: 0 19px 0 11px;
  background: #f5f5f5;
  flex: none;
}

.macro {
  margin-left: 21px;
}

.views {
  display: flex;
  margin-left: auto;
}

.view {
  display: flex;
  align-items: center;
  justify-content: center;
  width: 40px;
  height: 21px;
  padding: 0;
  border: 0;
  background: none;
}

.view.on {
  background: #dedede;
}

.zoom {
  display: flex;
  align-items: center;
  gap: 5px;
  margin-left: 6px;
}

.zoom input {
  appearance: none;
  width: 100px;
  height: 11px;
  margin: 0;
  background: linear-gradient(#707070, #707070) center / 100% 1px no-repeat;
}

.zoom input::-webkit-slider-thumb {
  appearance: none;
  width: 5px;
  height: 11px;
  background: #666;
}

.percent {
  margin-left: 8px;
  font-size: 13px;
}
</style>
